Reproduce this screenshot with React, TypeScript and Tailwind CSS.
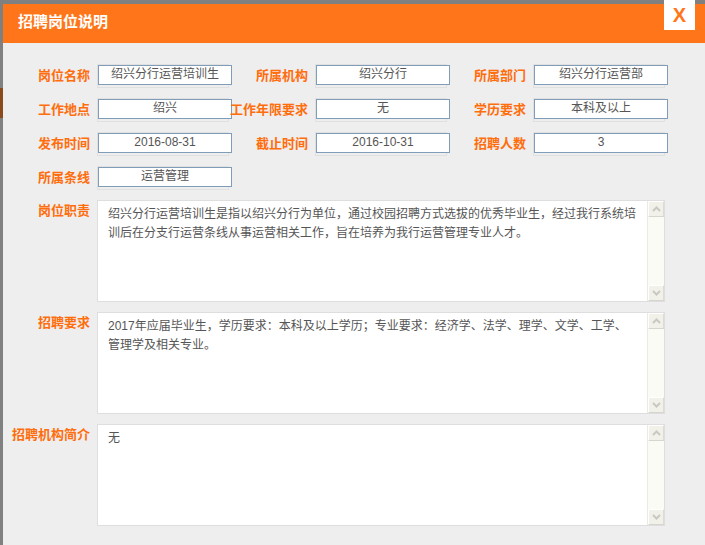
import { ReactNode } from "react";

const rows: [string, string][][] = [
  [
    ["岗位名称", "绍兴分行运营培训生"],
    ["所属机构", "绍兴分行"],
    ["所属部门", "绍兴分行运营部"],
  ],
  [
    ["工作地点", "绍兴"],
    ["工作年限要求", "无"],
    ["学历要求", "本科及以上"],
  ],
  [
    ["发布时间", "2016-08-31"],
    ["截止时间", "2016-10-31"],
    ["招聘人数", "3"],
  ],
  [["所属条线", "运营管理"]],
];

const areas: { label: string; lines: string[] }[] = [
  {
    label: "岗位职责",
    lines: [
      "绍兴分行运营培训生是指以绍兴分行为单位，通过校园招聘方式选拔的优秀毕业生，经过我行系统培",
      "训后在分支行运营条线从事运营相关工作，旨在培养为我行运营管理专业人才。",
    ],
  },
  {
    label: "招聘要求",
    lines: [
      "2017年应届毕业生，学历要求：本科及以上学历；专业要求：经济学、法学、理学、文学、工学、",
      "管理学及相关专业。",
    ],
  },
  { label: "招聘机构简介", lines: ["无"] },
];

function Label({ children, first }: { children: ReactNode; first: boolean }) {
  return (
    <div
      className={`${first ? "w-[87px]" : "w-[79px]"} shrink-0 mr-[7px] text-right text-[13px] leading-[15px] font-bold text-[#ff6d0c] whitespace-nowrap`}
    >
      {children}
    </div>
  );
}

function Field({ value }: { value: string }) {
  return (
    <div className="w-[132px] h-[24px] shrink-0 border border-[#e0e0e0]">
      <div className="w-[134px] h-[20px] pb-[2px] bg-white border border-[#7f9db9] flex items-center justify-center text-[12px] leading-none text-[#555555] whitespace-nowrap">
        {value}
      </div>
    </div>
  );
}

function ScrollBtn({ up }: { up: boolean }) {
  return (
    <div className="w-[16px] h-[16px] bg-[#f1f1ea] border border-t-white border-l-white border-r-[#dcdcd4] border-b-[#d6d6ce] flex items-center justify-center">
      <svg width="9" height="6" viewBox="0 0 9 6">
        <polyline
          points={up ? "1,5 4.5,1.5 8,5" : "1,1 4.5,4.5 8,1"}
          fill="none"
          stroke="#c9c9c1"
          strokeWidth="2"
        />
      </svg>
    </div>
  );
}

export default function App() {
  return (
    <div
      className="w-[705px] h-[545px] bg-[#808080] flex overflow-hidden"
      style={{ fontFamily: '"Liberation Sans", "Noto Sans CJK SC", sans-serif' }}
    >
      <div className="w-[3px] shrink-0 flex flex-col">
        <div className="h-[88px]" />
        <div className="h-[30px] bg-[#8a4a1c]" />
      </div>
      <div className="flex-1 flex flex-col pt-[4px] relative">
        <div className="h-[39px] shrink-0 bg-[#ff761a] flex items-center pl-[15px] pb-[2px]">
          <span className="text-[15px] font-bold text-white">招聘岗位说明</span>
        </div>
        <button className="absolute top-0 right-[10px] w-[31px] h-[30px] bg-white flex items-center justify-center text-[20px] font-bold leading-none text-[#ff761a]">
          X
        </button>

        <div className="flex-1 bg-[#eeeeee] pt-[21px] flex flex-col gap-[10px]">
          {rows.map((row, i) => (
            <div key={i} className="flex items-center h-[24px]">
              {row.map(([label, value], j) => (
                <div key={label} className="flex items-center">
                  <div className="pb-[2px]">
                    <Label first={j === 0}>{label}</Label>
                  </div>
                  <Field value={value} />
                </div>
              ))}
            </div>
          ))}

          {areas.map((a) => (
            <div key={a.label} className="flex items-start">
              <div className="pt-[3px]">
                <Label first>{a.label}</Label>
              </div>
              <div className="w-[568px] h-[102px] shrink-0 bg-white border border-[#dedede] flex">
                <div className="flex-1 pl-[10px] pt-[4px] text-[12px] leading-[19px] text-[#555555]">
                  {a.lines.map((l) => (
                    <div key={l} className="whitespace-nowrap">
                      {l}
                    </div>
                  ))}
                </div>
                <div className="w-[17px] shrink-0 bg-[#fbfbf6] border-l border-[#ebebe4] flex flex-col justify-between">
                  <ScrollBtn up />
                  <ScrollBtn up={false} />
                </div>
              </div>
            </div>
          ))}
        </div>
      </div>
    </div>
  );
}
